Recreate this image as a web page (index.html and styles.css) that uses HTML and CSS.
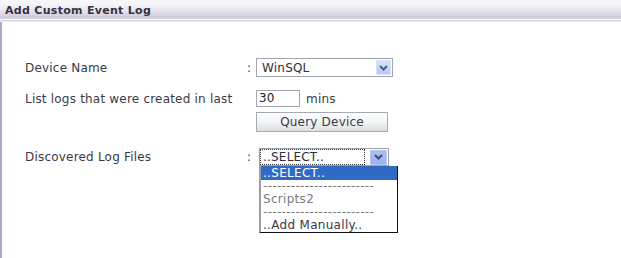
FILE: index.html
```html
<!DOCTYPE html>
<html>
<head>
<meta charset="utf-8">
<link rel="stylesheet" href="styles.css">
</head>
<body>
<div class="panel">
  <div class="header"><span class="title">Add Custom Event Log</span></div>
  <div class="body">
    <div class="form">
      <div class="row r1">
        <div class="label">Device Name</div>
        <div class="colon">:</div>
        <div class="ctl">
          <div class="select sel1">
            <span class="val">WinSQL</span>
            <span class="arrow"><svg width="9" height="6" viewBox="0 0 9 6"><path d="M1 1 L4.5 4.5 L8 1" fill="none" stroke="#4a5f8c" stroke-width="2"/></svg></span>
          </div>
        </div>
      </div>

      <div class="row r2">
        <div class="label">List logs that were created in last</div>
        <div class="colon"></div>
        <div class="ctl">
          <div class="input">30</div><span class="unit">mins</span>
        </div>
      </div>

      <div class="row r3">
        <div class="label"></div>
        <div class="colon"></div>
        <div class="ctl"><div class="btn">Query Device</div></div>
      </div>

      <div class="row r4">
        <div class="label">Discovered Log Files</div>
        <div class="colon">:</div>
        <div class="ctl">
          <div class="select sel2">
            <span class="val"><span class="focus">..SELECT..</span></span>
            <span class="arrow pressed"><svg width="9" height="6" viewBox="0 0 9 6"><path d="M1 1 L4.5 4.5 L8 1" fill="none" stroke="#3a4a7a" stroke-width="2"/></svg></span>
            <ul class="list">
              <li class="sel">..SELECT..</li>
              <li class="dim">------------------------</li>
              <li class="dim">Scripts2</li>
              <li class="dim">------------------------</li>
              <li>..Add Manually..</li>
            </ul>
          </div>
        </div>
      </div>
    </div>
  </div>
</div>
</body>
</html>
```
FILE: styles.css
```css
html, body {
  margin: 0;
  padding: 0;
  background: #ffffff;
}
body {
  width: 621px;
  height: 258px;
  overflow: hidden;
  font-family: "DejaVu Sans", Verdana, sans-serif;
  font-size: 12px;
  letter-spacing: 0.2px;
  color: #3a3a46;
}
.panel {
  height: 258px;
}
.header {
  height: 19px;
  background: linear-gradient(to bottom, #f7f7f9 0px, #f4f3f7 5px, #e6e2ec 11px, #d3cbdd 17px, #d6cfe0 19px);
  border-bottom: 1px solid #faf9fb;
  box-shadow: 0 1px 0 #dcd5e4, 0 2px 0 #ece8f0;
  display: flex;
  align-items: center;
  padding-left: 5px;
}
.title {
  font-weight: bold;
  font-size: 11px;
  color: #333344;
  letter-spacing: 0.3px;
  padding-top: 2px;
}
.body {
  border-left: 2px solid #aba7c6;
  height: 236px;
  margin-top: 2px;
}
.form {
  display: flex;
  flex-direction: column;
  padding-left: 23px;
  padding-top: 36px;
}
.row {
  display: grid;
  grid-template-columns: 219px 12px 1fr;
}
.label, .colon, .ctl {
  display: flex;
  align-items: center;
}
.r1 { height: 19px; }
.r2 { height: 17px; margin-top: 13px; }
.r3 { height: 20px; margin-top: 5px; }
.r4 { height: 18px; margin-top: 16px; }
.colon {
  padding-left: 3px;
}
.select {
  position: relative;
  box-sizing: border-box;
  border: 1px solid #a2a6b0;
  background: #fff;
  display: flex;
  align-items: center;
}
.sel1 {
  width: 137px;
  height: 19px;
}
.sel2 {
  width: 130px;
  height: 18px;
  margin-left: 3px;
  border-color: #9aa0ac;
}
.val {
  flex: 1;
  padding-left: 5px;
  color: #2e2e3a;
}
.sel2 .val {
  padding-left: 1px;
}
.focus {
  outline: 1px dotted #333;
  outline-offset: 0;
  padding: 0 2px;
  display: inline-block;
  width: 103px;
  box-sizing: border-box;
  line-height: 14px;
}
.arrow {
  width: 15px;
  height: 15px;
  margin-right: 1px;
  box-sizing: border-box;
  border: 1px solid #d6e0f7;
  background: linear-gradient(to bottom, #d6e1fa, #b8c9f2);
  display: flex;
  align-items: center;
  justify-content: center;
  border-radius: 1px;
}
.arrow.pressed {
  width: 17px;
  height: 15px;
  border-color: #b8c6ef;
  background: linear-gradient(to bottom, #aebff2, #9eb1ee);
}
.input {
  box-sizing: border-box;
  width: 44px;
  height: 17px;
  border: 1px solid #a3a7b2;
  padding-left: 2px;
  line-height: 15px;
  color: #222;
}
.unit {
  margin-left: 6px;
}
.btn {
  box-sizing: border-box;
  width: 132px;
  height: 20px;
  border: 1px solid #a6aab2;
  background: linear-gradient(to bottom, #ffffff 0%, #f3f4f4 50%, #dcdfe0 100%);
  display: flex;
  align-items: center;
  justify-content: center;
  font-size: 12px;
  color: #3a3a4a;
}
.list {
  position: absolute;
  left: -1px;
  top: 17px;
  width: 139px;
  margin: 0;
  padding: 0;
  list-style: none;
  background: #fff;
  border-left: 2px solid #9c9ca4;
  border-right: 1px solid #111;
  border-bottom: 1px solid #111;
  box-sizing: border-box;
}
.list li {
  height: 13px;
  line-height: 13px;
  padding-left: 2px;
  color: #3a3a46;
  white-space: nowrap;
  overflow: hidden;
  letter-spacing: 0.3px;
}
.list li.sel {
  background: #316ac5;
  color: #fff;
  height: 14px;
  line-height: 14px;
}
.list li.dim {
  color: #7a7a82;
}
```
